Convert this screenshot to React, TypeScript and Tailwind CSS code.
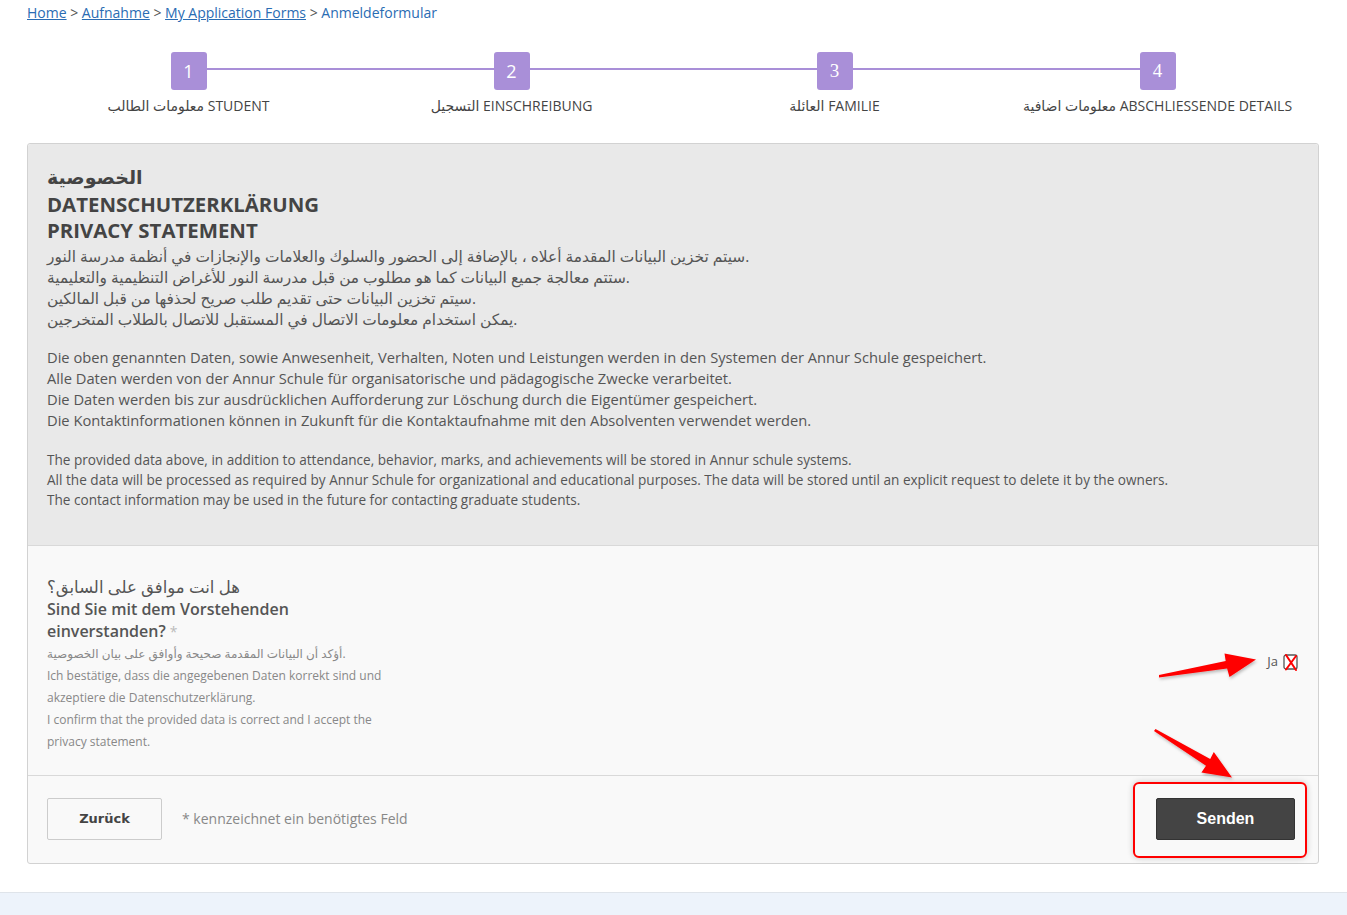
import { Fragment } from "react";

const steps = [
    { n: "1", label: "معلومات الطالب STUDENT", serif: false },
    { n: "2", label: "التسجيل EINSCHREIBUNG", serif: false },
    { n: "3", label: "العائلة FAMILIE", serif: true },
    { n: "4", label: "معلومات اضافية ABSCHLIESSENDE DETAILS", serif: true },
];

const arabicLines = [
    "سيتم تخزين البيانات المقدمة أعلاه ، بالإضافة إلى الحضور والسلوك والعلامات والإنجازات في أنظمة مدرسة النور.",
    "ستتم معالجة جميع البيانات كما هو مطلوب من قبل مدرسة النور للأغراض التنظيمية والتعليمية.",
    "سيتم تخزين البيانات حتى تقديم طلب صريح لحذفها من قبل المالكين.",
    "يمكن استخدام معلومات الاتصال في المستقبل للاتصال بالطلاب المتخرجين.",
];

const germanLines = [
    "Die oben genannten Daten, sowie Anwesenheit, Verhalten, Noten und Leistungen werden in den Systemen der Annur Schule gespeichert.",
    "Alle Daten werden von der Annur Schule für organisatorische und pädagogische Zwecke verarbeitet.",
    "Die Daten werden bis zur ausdrücklichen Aufforderung zur Löschung durch die Eigentümer gespeichert.",
    "Die Kontaktinformationen können in Zukunft für die Kontaktaufnahme mit den Absolventen verwendet werden.",
];

const englishLines = [
    "The provided data above, in addition to attendance, behavior, marks, and achievements will be stored in Annur schule systems.",
    "All the data will be processed as required by Annur Schule for organizational and educational purposes. The data will be stored until an explicit request to delete it by the owners.",
    "The contact information may be used in the future for contacting graduate students.",
];

const Stepper = () => (
    <div className="relative grid grid-cols-4 mt-[30px]">
        {/* connector behind the boxes */}
        <div className="absolute left-[12.5%] right-[12.5%] top-[16px] h-[2px] bg-[#a98fd8]" />
        {steps.map((s) => (
            <div key={s.n} className="relative flex flex-col items-center">
                <div
                    className={
                        s.serif
                            ? "w-[36px] h-[38px] rounded-[3px] bg-[#a98fd8] flex items-center justify-center text-white text-[19px] font-['Liberation_Serif',serif]"
                            : "w-[36px] h-[38px] rounded-[3px] bg-[#a98fd8] flex items-center justify-center text-white text-[18px]"
                    }
                >
                    {s.n}
                </div>
                <div className="mt-[6px] text-[14px] leading-[19px] text-[#444]">{s.label}</div>
            </div>
        ))}
    </div>
);

const Arrows = () => (
    <svg className="absolute left-0 top-0 pointer-events-none" width="1347" height="915">
        <defs>
            <filter id="sh" x="-20%" y="-20%" width="140%" height="140%">
                <feDropShadow dx="1" dy="2" stdDeviation="1.5" floodColor="#000" floodOpacity="0.25" />
            </filter>
        </defs>
        <polygon
            filter="url(#sh)"
            fill="#ff0000"
            points="1159,675 1225.7,661 1224.5,653.4 1256,659.5 1229.5,677 1227.1,668.6 1159,677.5"
        />
        <polygon
            filter="url(#sh)"
            fill="#ff0000"
            points="1155.5,729 1210.2,759 1213.8,752 1232,777.5 1201.4,772.5 1206,765.8 1154,731"
        />
    </svg>
);

export default function App() {
    return (
        <div className="relative w-[1347px] h-[915px] overflow-hidden bg-white text-[#444] font-['Open_Sans','DejaVu_Sans',sans-serif]">
            <div className="px-[27px] pt-[3px] w-[1346px]">
                {/* Breadcrumb */}
                <nav className="text-[14px] leading-[19px] text-[#2a6cb3]">
                    <a href="#" className="underline">Home</a>
                    <span className="text-[#555]"> &gt; </span>
                    <a href="#" className="underline">Aufnahme</a>
                    <span className="text-[#555]"> &gt; </span>
                    <a href="#" className="underline">My Application Forms</a>
                    <span className="text-[#555]"> &gt; </span>
                    <span>Anmeldeformular</span>
                </nav>

                <Stepper />

                {/* Card */}
                <div className="mt-[28px] w-[1292px] border border-[#d2d2d2] rounded-[3px] bg-[#f9f9f9]">
                    <div className="bg-[#e9e9e9] px-[19px] pt-[20px] pb-[35px] rounded-t-[3px]">
                        <h2 className="font-bold text-[20.4px] leading-[26.5px] text-[#444]">
                            <div className="text-[19px]">الخصوصية</div>
                            <div>DATENSCHUTZERKLÄRUNG</div>
                            <div>PRIVACY STATEMENT</div>
                        </h2>
                        <div className="mt-[2px] text-[15.4px] leading-[21px] text-[#555]">
                            {arabicLines.map((l, i) => (
                                <div key={i}>{l}</div>
                            ))}
                        </div>
                        <div className="mt-[17px] text-[14.7px] leading-[21px] text-[#555]">
                            {germanLines.map((l, i) => (
                                <div key={i}>{l}</div>
                            ))}
                        </div>
                        <div className="mt-[19px] text-[13.6px] leading-[20px] text-[#555]">
                            {englishLines.map((l, i) => (
                                <div key={i}>{l}</div>
                            ))}
                        </div>
                    </div>

                    <div className="border-t border-[#d9d9d9] px-[19px] pt-[30px] pb-[22px] flex justify-between">
                        <div className="w-[345px]">
                            <div className="text-[16px] leading-[22px] font-semibold text-[#555]">
                                <span className="text-[16.5px] font-normal">هل انت موافق على السابق؟</span>
                                <br />
                                Sind Sie mit dem Vorstehenden einverstanden?{" "}
                                <span className="font-normal text-[#bbb] text-[14px]">*</span>
                            </div>
                            <div className="text-[12px] leading-[22px] text-[#888]">
                                {[
                                    "أؤكد أن البيانات المقدمة صحيحة وأوافق على بيان الخصوصية.",
                                    "Ich bestätige, dass die angegebenen Daten korrekt sind und akzeptiere die Datenschutzerklärung.",
                                    "I confirm that the provided data is correct and I accept the privacy statement.",
                                ].map((l, i) => (
                                    <Fragment key={i}>
                                        <div>{l}</div>
                                    </Fragment>
                                ))}
                            </div>
                        </div>
                        <div className="mt-[77px] flex items-center gap-[5px] h-[18px] text-[13px] text-[#555]">
                            <span>Ja</span>
                            <svg width="16" height="18" viewBox="0 0 16 18">
                                <rect x="1" y="2" width="13" height="14" rx="2" fill="#fff" stroke="#555" strokeWidth="1.3" />
                                <path d="M3 2 L13 17 M13 3 L3 16.5" stroke="#ff0000" strokeWidth="2" strokeLinecap="round" />
                            </svg>
                        </div>
                    </div>

                    <div className="border-t border-[#d9d9d9] pl-[19px] pr-[23px] pt-[22px] pb-[23px] flex items-center justify-between">
                        <div className="flex items-center gap-[20px]">
                            <button className="w-[115px] h-[42px] border border-[#ccc] rounded-[2px] bg-[#f9f9f9] text-[13px] font-bold text-[#444] font-['DejaVu_Sans',sans-serif]">
                                Zurück
                            </button>
                            <span className="text-[14px] text-[#888]">* kennzeichnet ein benötigtes Feld</span>
                        </div>
                        <div className="relative">
                            <div className="absolute -left-[23px] -right-[12px] -top-[16px] -bottom-[18px] border-2 border-[#ff0000] rounded-[6px] shadow-[0_0_6px_rgba(0,0,0,0.2)]" />
                            <button className="relative w-[139px] h-[42px] rounded-[2px] bg-[#444] border border-[#333] text-white text-[16px] font-bold font-['Liberation_Sans',Arial,sans-serif]">
                                Senden
                            </button>
                        </div>
                    </div>
                </div>
            </div>

            <div className="absolute left-0 right-0 top-[892px] bottom-0 border-t border-[#dfe4ea] bg-[#edf3fb]" />

            <Arrows />
        </div>
    );
}
